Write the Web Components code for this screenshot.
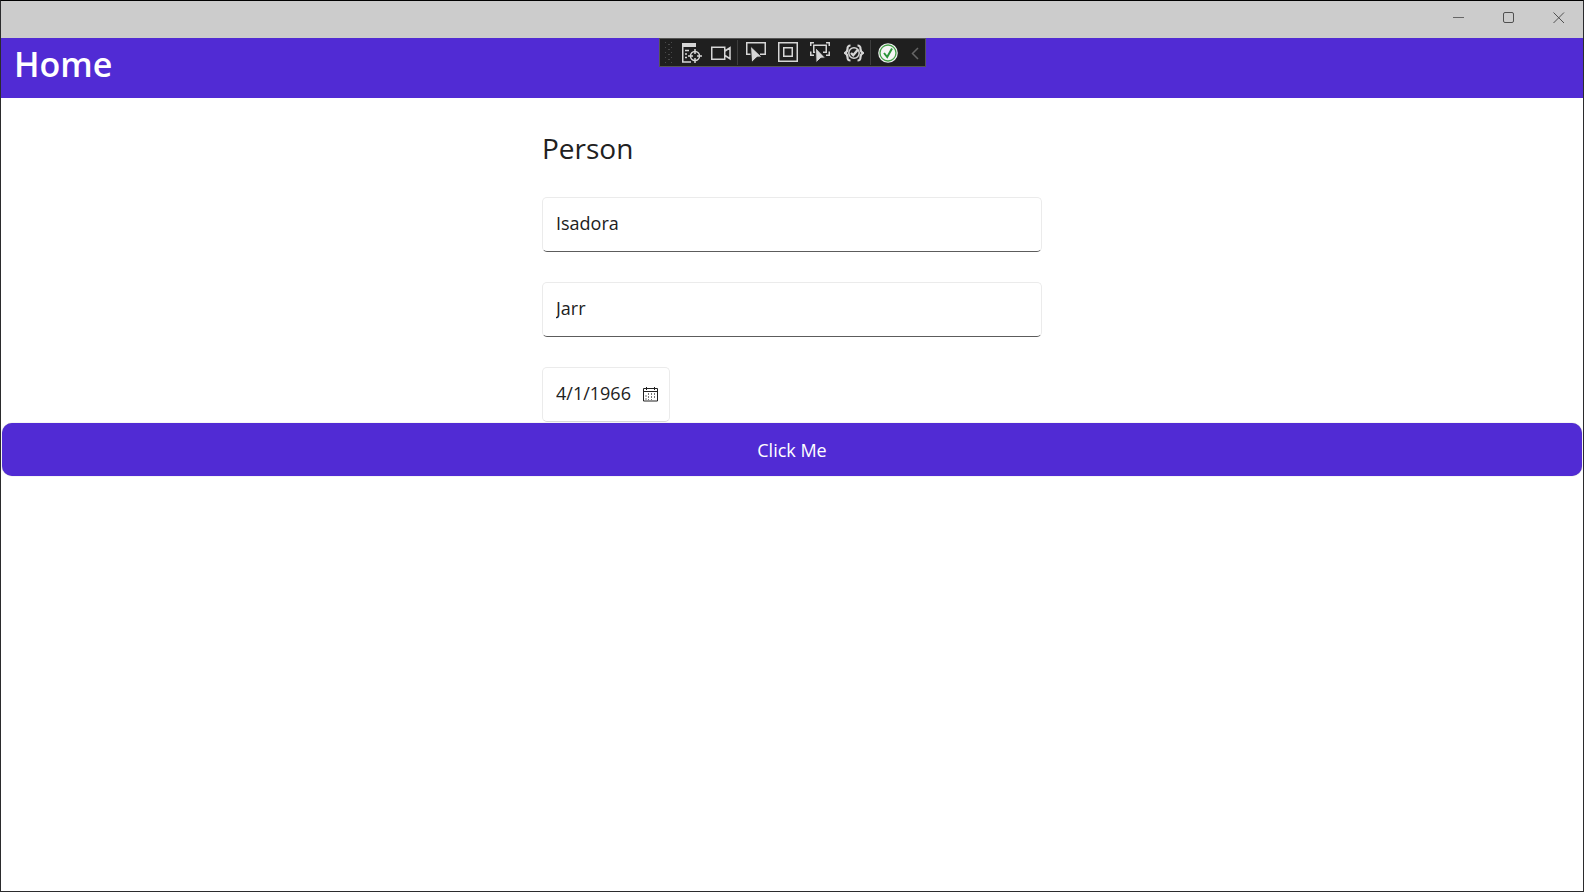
<!DOCTYPE html>
<html lang="en">
<head>
<meta charset="utf-8">
<title>Home</title>
<style>
html, body { height: 100%; }
body { margin: 0; font-family: "Open Sans", "Noto Sans", sans-serif; color: #212121; }
</style>
</head>
<body>
<app-window>
  <title-bar slot="title"></title-bar>
  <nav-header slot="header">Home</nav-header>
  <person-form slot="content"></person-form>
  <primary-button slot="content">Click Me</primary-button>
  <debug-toolbar slot="overlay"></debug-toolbar>
</app-window>
<script>
const define = (name, html) => {
  const template = document.createElement('template');
  template.innerHTML = `<style>*{box-sizing:border-box}button{font:inherit;color:inherit;border:0;padding:0;background:none;margin:0}</style>` + html;
  customElements.define(name, class extends HTMLElement {
    constructor() {
      super();
      this.attachShadow({ mode: 'open' }).append(template.content.cloneNode(true));
    }
  });
};

define('app-window', `
<style>
:host { display: flex; flex-direction: column; position: relative; box-sizing: border-box; min-height: 100%; background: #fff; border: 1px solid #2b2b2d; border-top-color: #000; }
main { display: flex; flex-direction: column; flex: 1; }
.overlay { position: absolute; top: 37px; left: 0; right: 0; display: flex; justify-content: center; }
</style>
<slot name="title"></slot>
<slot name="header"></slot>
<main><slot name="content"></slot></main>
<div class="overlay"><slot name="overlay"></slot></div>`);

define('title-bar', `
<style>
:host { display: flex; justify-content: flex-end; height: 37px; background: #ccc; }
button { width: 50px; height: 33px; padding-left: 2px; display: flex; align-items: center; justify-content: center; }
svg { fill: none; stroke: #505050; }
</style>
<button aria-label="Minimize"><svg width="12" height="13"><path d="M0 6.5h11" stroke="#666"/></svg></button>
<button aria-label="Maximize"><svg width="12" height="13"><rect x=".5" y="1.5" width="10" height="10" rx="1.5"/></svg></button>
<button aria-label="Close"><svg width="12" height="13"><path d="M.5 1.5l10.500 10.500M11 1.500L.5 12"/></svg></button>`);

define('nav-header', `
<style>
:host { display: block; height: 60px; background: #512bd4; color: #fff; }
h1 { margin: 0; padding: 0 13px; font-size: 34px; line-height: 52px; font-weight: 600; }
</style>
<h1><slot></slot></h1>`);

define('person-form', `
<style>
:host { display: block; width: 500px; max-width: 100%; margin: 0 auto; padding-top: 32px; }
form { display: flex; flex-direction: column; align-items: flex-start; gap: 30px; }
h2 { margin: 0; font-size: 28px; line-height: 37px; font-weight: 400; }
</style>
<form>
  <h2>Person</h2>
  <text-entry></text-entry>
  <text-entry></text-entry>
  <date-entry></date-entry>
</form>`);

class TextEntry extends HTMLElement {
  constructor() {
    super();
    this.attachShadow({ mode: 'open' }).innerHTML = `
<style>
:host { display: block; width: 100%; }
input { display: block; box-sizing: border-box; width: 100%; height: 55px; padding: 0 13px 4px; border: 1px solid #ebebeb; border-bottom-color: #5c5c5c; border-radius: 5px; background: #fff; font: inherit; font-size: 18px; color: #212121; outline: 0; }
</style>
<input type="text">`;
  }
  set value(v) { this.shadowRoot.querySelector('input').value = v; }
  set label(v) { this.shadowRoot.querySelector('input').setAttribute('aria-label', v); }
}
customElements.define('text-entry', TextEntry);

define('date-entry', `
<style>
:host { display: flex; align-items: center; box-sizing: border-box; width: 128px; height: 55px; padding: 0 10px 0 13px; border: 1px solid #ebebeb; border-bottom-color: #d8d8d8; border-radius: 5px; }
input { flex: 1; min-width: 0; border: 0; padding: 0 0 4px; background: none; font: inherit; font-size: 18px; color: #212121; outline: 0; }
button, svg { display: block; }
</style>
<input type="text" aria-label="Birth date" value="4/1/1966">
<button type="button" aria-label="Open calendar"><svg width="16" height="15" fill="none" stroke="#222"><path d="M.5 1.500h14v12.500h-14zM.5 4.500h14M3.500 0v3M11.500 0v3"/><path d="M5.500 6v7M8.500 6v7M11.500 6v5M3 8v5" stroke="#777" stroke-dasharray="2 1"/></svg></button>`);

define('primary-button', `
<style>
:host { display: block; padding: 1px; }
button { display: block; width: 100%; height: 53px; border-radius: 10px; background: #512bd4; color: #fff; font-size: 18px; box-shadow: 0 0 1px #999; }
</style>
<button><slot></slot></button>`);

define('debug-toolbar', `
<style>
:host { display: grid; grid-template-columns: 18px 28px 30px 4px 32px 32px 32px 34px 2px 32px 21px; align-items: center; height: 29px; box-sizing: border-box; background: #1f1f1f; border: 1px solid #555; }
button { height: 27px; display: flex; align-items: center; justify-content: center; }
svg { display: block; fill: none; stroke: #d6d6d6; stroke-width: 1.5; }
.grip { display: block; fill: #4a4a4a; stroke: none; justify-self: center; }
.sep { width: 1px; height: 25px; background: #3d3d3d; justify-self: center; }
.solid { fill: #d6d6d6; stroke: none; }
.arrow { fill: #d6d6d6; stroke: #1f1f1f; stroke-width: 1; }
.wide { padding-left: 2px; }
</style>
<svg class="grip" width="8" height="22" aria-hidden="true"><defs><pattern id="dots" width="6" height="5" patternUnits="userSpaceOnUse"><path d="M0 0h1v1H0zM3 2h2v1H3z"/></pattern></defs><path fill="url(#dots)" d="M0 0h8v22H0z"/></svg>
<button aria-label="Go to live visual tree"><svg width="20" height="21"><path class="solid" d="M0 1h14v4H0z"/><path d="M.750 5v15H9M3 8.500h4M3 12h2M3 15.500h2"/><circle cx="13" cy="14" r="4.500"/><path d="M13 7v5M13 16v5M6 14h5M15 14h5"/></svg></button>
<button aria-label="Show in app"><svg width="20" height="21"><path d="M.750 5.250h13v12H.750zM14 9l5-3.250v11L14 13.500"/></svg></button>
<span class="sep"></span>
<button aria-label="Select element"><svg width="20" height="21"><path d="M5 12.250H.750V.750h18.500v11.500H14"/><path class="arrow" d="M4.500 4l11.500 11-5 .250-5.500 5.500z"/></svg></button>
<button aria-label="Display layout adorners"><svg width="20" height="21"><path d="M.750.750h18.500v18.500H.750zM5.750 5.750h8.500v8.500h-8.500z"/></svg></button>
<button aria-label="Track focused element"><svg width="20" height="21"><path d="M.750 4V.750H4M16 .750h3.250V4M.750 9.500v3.750H4M19.250 9.500v3.750H16M6 10.250H3.750v-7h12.500v7H13"/><path class="arrow" d="M5.500 5.500l10 10.500-4.500.250-5 4.500z"/></svg></button>
<button class="wide" aria-label="Binding failures"><svg width="20" height="21"><path stroke-width="2.200" d="M6.500 3.500C4 3.500 3.500 4.500 3.500 7c0 2.200-.5 3-2.500 4 2 1 2.500 1.800 2.500 4 0 2.500.5 3.500 3 3.500M13.500 3.500c2.500 0 3 1 3 3.500 0 2.200.5 3 2.500 4-2 1-2.500 1.800-2.500 4 0 2.500-.5 3.500-3 3.500"/><circle cx="10" cy="11" r="5.200" fill="#1f1f1f"/><path d="M7 11l2.200 2.200L14 7.500" stroke-width="2.400"/></svg></button>
<span class="sep"></span>
<button aria-label="Hot reload available"><svg width="20" height="21"><circle cx="10" cy="11" r="9.800" fill="#f2f2f2" stroke="none"/><circle cx="10" cy="11" r="8" fill="#f5f5f5" stroke="#43a047" stroke-width="1.300"/><path d="M6 11l3.200 4L14 6.500" stroke="#299438" stroke-width="2"/></svg></button>
<button class="wide" aria-label="Collapse toolbar"><svg width="8" height="15" style="stroke:#666"><path d="M7 3L1.500 8.500 7 14"/></svg></button>`);

const entries = document.querySelector('person-form').shadowRoot.querySelectorAll('text-entry');
[['First name', 'Isadora'], ['Last name', 'Jarr']].forEach(([label, value], i) => {
  entries[i].label = label;
  entries[i].value = value;
});
</script>
</body>
</html>
